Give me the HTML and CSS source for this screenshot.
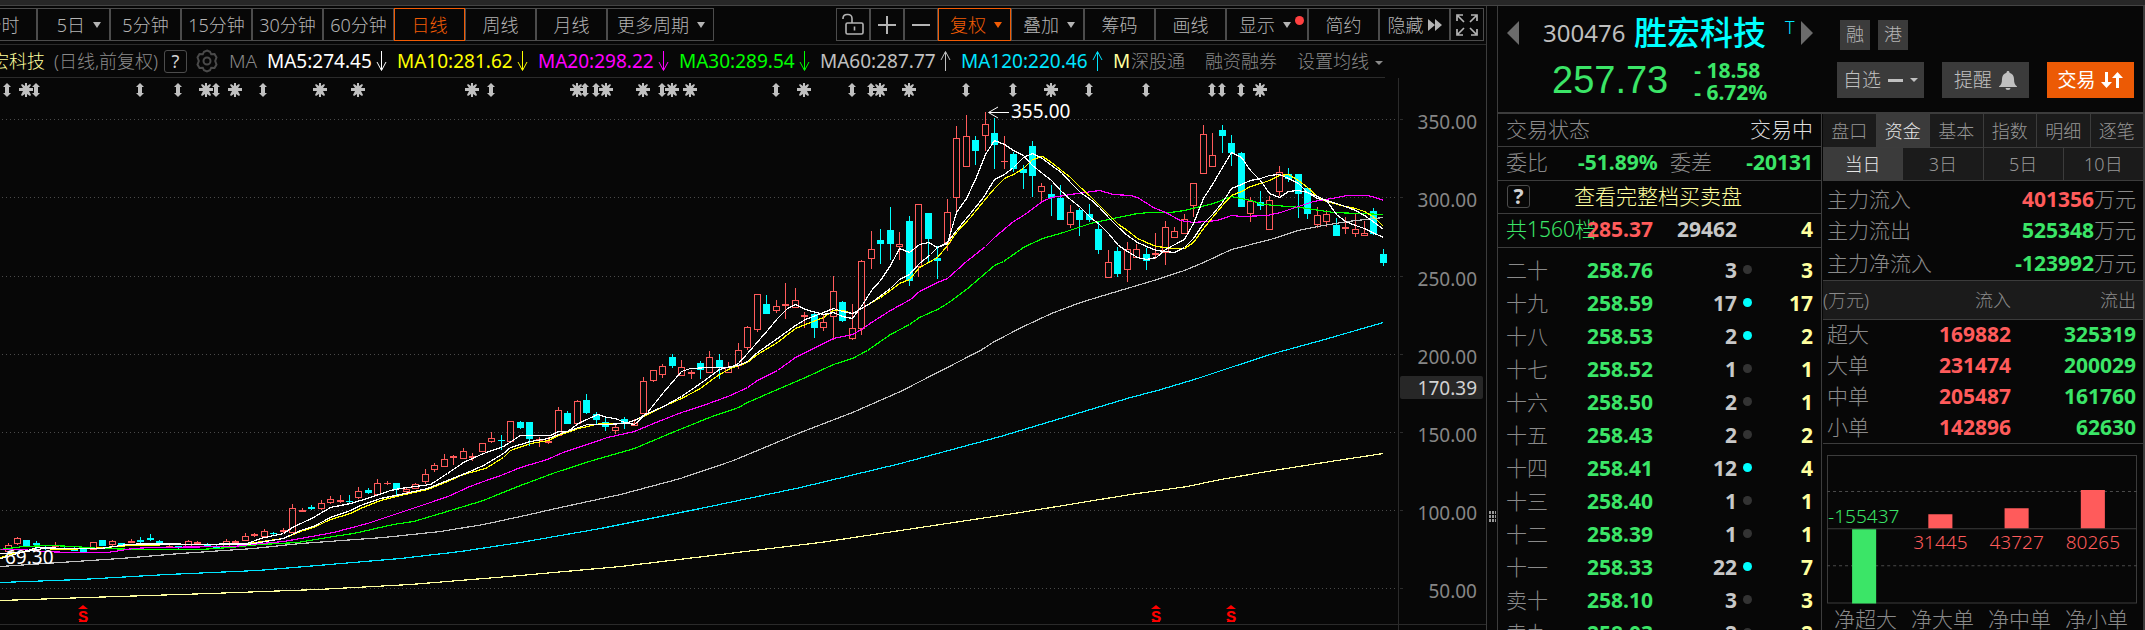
FILE: index.html
```html
<!DOCTYPE html>
<html lang="zh-CN">
<head>
<meta charset="utf-8">
<title>胜宏科技 300476</title>
<link rel="stylesheet" href="styles.css">
</head>
<body>
<div class="titlebar"></div>
<div class="app">
  <main class="chart-pane">
    <nav class="toolbar" aria-label="周期">
      <div class="group periods">
        <button class="tool">分时</button>
        <button class="tool w-caret">5日<i class="caret"></i></button>
        <button class="tool">5分钟</button>
        <button class="tool">15分钟</button>
        <button class="tool">30分钟</button>
        <button class="tool">60分钟</button>
        <button class="tool on">日线</button>
        <button class="tool">周线</button>
        <button class="tool">月线</button>
        <button class="tool w-more">更多周期<i class="caret"></i></button>
      </div>
      <div class="group actions">
        <button class="tool icon" aria-label="解锁">
          <svg width="22" height="24" viewBox="0 0 22 24"><path d="M1 6V5a4 4 0 0 1 4-3.500h1a4 4 0 0 1 4 4V10M4 19.500v-8q0-1.500 1.500-1.500h14q1.500 0 1.500 1.500v8q0 1.500-1.500 1.500H5.500Q4 21 4 19.500M12.500 13.500v4" fill="none" stroke="currentColor" stroke-width="1.600"/></svg>
        </button>
        <button class="tool icon" aria-label="放大">
          <svg width="18" height="18" viewBox="0 0 18 18"><path d="M9 0v18M0 9h18" stroke="currentColor" stroke-width="2"/></svg>
        </button>
        <button class="tool icon" aria-label="缩小">
          <svg width="18" height="18" viewBox="0 0 18 18"><path d="M0 9h18" stroke="currentColor" stroke-width="2"/></svg>
        </button>
        <button class="tool w-caret on">复权<i class="caret"></i></button>
        <button class="tool w-caret">叠加<i class="caret"></i></button>
        <button class="tool">筹码</button>
        <button class="tool">画线</button>
        <button class="tool w-show">显示<i class="caret"></i><i class="reddot"></i></button>
        <button class="tool">简约</button>
        <button class="tool hide">隐藏<svg width="14" height="12" viewBox="0 0 14 12"><path d="M0 0l7 6-7 6zM7 0l7 6-7 6z" fill="currentColor"/></svg></button>
        <button class="tool icon" aria-label="全屏">
          <svg width="22" height="22" viewBox="0 0 22 22"><path d="M1 7V1h6M15 1h6v6M21 15v6h-6M7 21H1v-6M2 2l6 6M20 2l-6 6M20 20l-6-6M2 20l6-6" fill="none" stroke="currentColor" stroke-width="1.700"/></svg>
        </button>
      </div>
    </nav>

    <div class="indicators">
      <span class="stock">胜宏科技</span>
      <span class="mode">(日线,前复权)</span>
      <button class="help">?</button>
      <button class="gear" aria-label="设置">
        <svg width="22" height="24" viewBox="0 0 22 24"><path d="M11 1.500l3 1.200 1.200 2.600 3.300-.3 2 3.400-1.300 3.600 1.300 3.600-2 3.400-3.300-.3-1.200 2.600-3 1.200-3-1.200-1.200-2.600-3.300.3-2-3.400L2.800 12 1.500 8.400l2-3.400 3.300.3L8 2.700z" fill="none" stroke="currentColor" stroke-width="2"/><circle cx="11" cy="12" r="3.500" fill="none" stroke="currentColor" stroke-width="2"/></svg>
      </button>
      <span class="ma-name">MA</span>
      <span class="ma ma5 first">MA5:274.45<svg class="arr" viewBox="0 0 11 20"><path d="M5.500 0v19M1 11l4.500 8.500L10 11"/></svg></span>
      <span class="ma ma10">MA10:281.62<svg class="arr" viewBox="0 0 11 20"><path d="M5.500 0v19M1 11l4.500 8.500L10 11"/></svg></span>
      <span class="ma ma20">MA20:298.22<svg class="arr" viewBox="0 0 11 20"><path d="M5.500 0v19M1 11l4.500 8.500L10 11"/></svg></span>
      <span class="ma ma30">MA30:289.54<svg class="arr" viewBox="0 0 11 20"><path d="M5.500 0v19M1 11l4.500 8.500L10 11"/></svg></span>
      <span class="ma ma60">MA60:287.77<svg class="arr" viewBox="0 0 11 20"><path d="M5.500 20V1M1 9L5.500.5 10 9"/></svg></span>
      <span class="ma ma120 last">MA120:220.46<svg class="arr" viewBox="0 0 11 20"><path d="M5.500 20V1M1 9L5.500.5 10 9"/></svg></span>
      <span class="ma-rest">M</span>
      <div class="links">
        <a href="#sgt">深股通</a>
        <a href="#rzrq">融资融券</a>
        <a href="#ma">设置均线<i class="caret small"></i></a>
      </div>
    </div>

    <svg class="kline" viewBox="0 78 1486 552" preserveAspectRatio="xMinYMin slice" role="img" aria-label="日K线图">
      <defs>
        <path id="ud" d="M0-7l4 4H2v6h2L0 7l-4-4h2v-6h-2z"/>
        <path id="st" d="M-1-7h2v3l3-2 1 1-2 3h4v3H3l2 4-1 1-3-2v3h-2v-3l-3 2-1-1 2-4h-4v-3h4l-2-3 1-1 3 2z"/>
      </defs>
      <g id="grid"></g>
      <g id="events" class="events"></g>
      <g id="candles" class="crisp"></g>
      <g class="lines crisp" transform="translate(.5 .5)">
        <polyline class="l250" points="0,600 87,597 210,593 317,589 410,584 520,575 620,566 720,554 820,542 920,527 1020,512 1130,494 1187,486 1220,479 1273,470 1330,461 1383,453"/>
        <polyline class="l120" points="0,582 80,579 167,574 257,570 317,565 400,558 460,551 520,542 600,528 700,508 800,487 900,463 1000,436 1080,412 1130,397 1157,390 1197,378 1230,367 1273,353 1317,341 1383,322"/>
        <polyline class="l60" points="0,566 60,562 120,558 180,553 253,548 300,543 383,537 440,531 483,524 520,516 560,507 620,494 680,478 733,460 800,432 852,412 900,391 980,350 994,341 1023,326 1051,313 1080,302 1113,292 1150,281 1184,270 1203,262 1231,249 1270,239 1298,230 1317,226 1347,221 1383,217"/>
        <polyline class="l30" points="0,549 23,546 50,545 73,546 100,548 140,549 200,549 230,547 260,544 297,542 333,536 353,533 393,524 413,521 440,513 483,500 500,493 520,485 555,472 592,460 634,448 667,434 709,417 738,407 747,402 777,389 805,377 833,364 852,358 867,350 890,334 909,324 919,317 937,309 947,303 966,289 994,265 1003,261 1023,247 1042,238 1063,232 1090,223 1113,218 1137,213 1150,212 1170,212 1184,210 1213,203 1231,196 1250,200 1263,204 1300,207 1333,212 1383,214"/>
        <polyline class="l20" points="0,549 20,549 43,551 70,552 107,552 133,548 150,547 233,546 250,544 283,541 300,538 333,532 367,523 400,512 433,501 450,495 467,487 483,481 503,474 520,467 547,459 560,453 607,437 634,431 653,423 681,412 700,406 730,395 747,387 757,380 777,370 795,357 823,343 833,338 852,334 861,329 871,322 890,310 910,299 919,291 937,282 947,278 966,261 985,246 994,237 1013,221 1023,215 1042,201 1051,197 1070,194 1099,190 1113,194 1130,195 1137,197 1153,207 1165,212 1180,220 1193,222 1217,220 1231,215 1241,216 1267,215 1280,212 1298,206 1313,201 1337,197 1347,195 1367,195 1375,197 1383,200"/>
        <polyline class="l10" points="0,557 9,554 30,550 43,548 60,549 90,548 130,545 180,544 240,544 283,538 300,531 313,527 330,519 350,513 360,508 380,500 400,495 427,489 447,481 463,474 485,468 503,457 510,450 530,443 548,440 558,435 578,428 600,423 624,423 634,420 647,414 663,406 681,398 700,388 709,381 719,374 730,368 747,362 757,354 777,342 795,328 805,324 823,317 833,310 842,310 852,313 861,308 880,297 890,290 899,283 909,279 919,267 930,261 937,257 947,245 956,232 970,217 983,201 994,188 1004,178 1013,174 1023,168 1032,159 1042,156 1051,162 1061,170 1070,177 1080,187 1090,196 1099,205 1108,214 1118,224 1127,230 1137,238 1146,242 1156,246 1165,247 1174,248 1184,248 1193,242 1203,228 1212,217 1222,205 1231,195 1241,191 1250,186 1260,183 1269,180 1279,175 1288,174 1298,180 1307,187 1317,196 1326,201 1345,206 1355,208 1364,211 1374,217 1383,226"/>
        <polyline class="l5" points="0,553 20,552 43,548 100,548 127,544 200,544 247,544 283,538 300,530 313,526 330,517 350,510 360,505 380,498 400,494 427,488 447,480 467,472 483,465 503,453 510,447 530,441 548,438 558,434 578,427 587,424 605,424 624,423 634,420 647,413 663,406 681,396 700,383 719,369 730,366 738,365 747,361 757,352 777,338 795,325 805,319 823,312 833,308 842,311 852,313 861,308 871,302 890,288 899,279 909,274 919,263 930,254 937,247 947,242 956,230 970,213 983,197 994,179 1004,174 1013,167 1023,157 1032,153 1042,158 1051,165 1061,172 1070,182 1080,192 1090,199 1099,207 1108,217 1118,227 1127,235 1137,242 1146,246 1156,250 1165,251 1174,252 1184,247 1193,238 1203,223 1212,214 1222,202 1231,188 1241,184 1250,180 1260,178 1269,175 1279,174 1288,178 1298,183 1307,192 1317,198 1326,200 1336,203 1345,206 1355,210 1364,215 1374,222 1383,229"/>
        <polyline class="l5" points="0,558 17,553 37,547 67,548 100,548 127,544 150,543 200,544 247,543 260,538 283,533 292,527 313,517 330,507 350,503 370,497 390,490 400,488 430,484 447,473 463,462 483,453 503,446 520,435 550,435 558,431 567,431 578,423 597,414 607,417 615,418 624,422 634,424 647,412 663,392 681,371 690,368 710,367 730,367 738,363 747,353 767,330 777,318 787,308 795,304 805,309 823,314 833,312 842,316 852,318 861,306 871,290 880,280 890,265 899,248 909,252 919,244 928,242 937,247 947,243 956,212 966,198 975,179 985,154 994,140 1004,144 1013,150 1023,155 1032,165 1042,173 1051,180 1061,191 1070,199 1080,207 1090,217 1099,224 1108,233 1118,245 1127,251 1137,257 1146,259 1156,257 1165,249 1184,239 1193,223 1203,198 1212,184 1222,167 1231,152 1241,157 1250,170 1260,180 1269,193 1279,197 1288,191 1298,190 1307,192 1317,196 1326,200 1336,214 1345,221 1355,225 1364,228 1374,233 1383,237"/>
      </g>
      <path class="frame" d="M0 624.500h1486M1398.500 78v552"/>
      <path class="pointer" d="M1009 112.500h-20M998 107l-9.500 5.500 9.500 5.500"/>
      <text class="extreme" x="1011" y="118">355.00</text>
      <text class="extreme" x="5" y="564">69.30</text>
      <rect class="tag" x="1400" y="376" width="83" height="23" rx="2"/>
      <text class="tick tagtext" x="1477" y="395">170.39</text>
      <g id="trades" class="trades"></g>
    </svg>
  </main>

  <div class="splitter"><i></i></div>

  <aside class="quote">
    <header class="head">
      <div class="ident">
        <div class="title">
          <button class="nav" aria-label="上一个"><svg width="12" height="24" viewBox="0 0 12 24"><path d="M12 0v24L0 12z"/></svg></button>
          <span class="code">300476</span>
          <h1 class="name">胜宏科技</h1>
          <span class="flag">T</span>
          <button class="nav" aria-label="下一个"><svg width="12" height="24" viewBox="0 0 12 24"><path d="M0 0v24l12-12z"/></svg></button>
        </div>
        <div class="price">
          <strong class="last-price">257.73</strong>
          <div class="delta"><span>- 18.58</span><span>- 6.72%</span></div>
        </div>
      </div>
      <div class="side">
        <div class="badges"><span>融</span><span>港</span></div>
        <div class="btns">
          <button class="btn">自选<i class="dash"></i><i class="caret small"></i></button>
          <button class="btn">提醒<svg width="18" height="19" viewBox="0 0 18 19"><path d="M9 0c1 0 1.500.7 1.500 1.700C13.500 2.500 15 5 15 8c0 4 1 6 3 7.500V16H0v-.5C2 14 3 12 3 8c0-3 1.500-5.500 4.500-6.300C7.500.7 8 0 9 0zM6.500 17h5a2.500 2 0 0 1-5 0z" fill="currentColor"/></svg></button>
          <button class="btn trade">交易<svg width="24" height="17" viewBox="0 0 24 17"><path d="M5 0h3v10h4l-5.500 6L1 10h4zM16 16h3V6h4l-5.500-6L12 6h4z" fill="currentColor"/></svg></button>
        </div>
      </div>
    </header>

    <div class="cols">
      <section class="book">
        <div class="row"><span>交易状态</span><span class="bright">交易中</span></div>
        <div class="row ratio"><span>委比</span><b class="g">-51.89%</b><span>委差</span><b class="g">-20131</b></div>
        <div class="row full"><button class="help">?</button><a href="#depth">查看完整档买卖盘</a></div>
        <div class="row total"><span class="g">共1560档</span><b class="r">285.37</b><b class="q">29462</b><b class="y">4</b></div>
        <table class="levels">
          <tbody>
            <tr><th>二十</th><td class="g">258.76</td><td class="q">3</td><td><i class="dot"></i></td><td class="y">3</td></tr>
            <tr><th>十九</th><td class="g">258.59</td><td class="q">17</td><td><i class="dot c"></i></td><td class="y">17</td></tr>
            <tr><th>十八</th><td class="g">258.53</td><td class="q">2</td><td><i class="dot c"></i></td><td class="y">2</td></tr>
            <tr><th>十七</th><td class="g">258.52</td><td class="q">1</td><td><i class="dot"></i></td><td class="y">1</td></tr>
            <tr><th>十六</th><td class="g">258.50</td><td class="q">2</td><td><i class="dot"></i></td><td class="y">1</td></tr>
            <tr><th>十五</th><td class="g">258.43</td><td class="q">2</td><td><i class="dot"></i></td><td class="y">2</td></tr>
            <tr><th>十四</th><td class="g">258.41</td><td class="q">12</td><td><i class="dot c"></i></td><td class="y">4</td></tr>
            <tr><th>十三</th><td class="g">258.40</td><td class="q">1</td><td><i class="dot"></i></td><td class="y">1</td></tr>
            <tr><th>十二</th><td class="g">258.39</td><td class="q">1</td><td><i class="dot"></i></td><td class="y">1</td></tr>
            <tr><th>十一</th><td class="g">258.33</td><td class="q">22</td><td><i class="dot c"></i></td><td class="y">7</td></tr>
            <tr><th>卖十</th><td class="g">258.10</td><td class="q">3</td><td><i class="dot"></i></td><td class="y">3</td></tr>
            <tr><th>卖九</th><td class="g">258.03</td><td class="q">2</td><td><i class="dot"></i></td><td class="y">2</td></tr>
          </tbody>
        </table>
      </section>

      <section class="funds">
        <div class="tabs">
          <button>盘口</button><button class="on">资金</button><button>基本</button><button>指数</button><button>明细</button><button>逐笔</button>
        </div>
        <div class="tabs days">
          <button class="on">当日</button><button>3日</button><button>5日</button><button>10日</button>
        </div>
        <dl class="main-flow">
          <div><dt>主力流入</dt><dd><b class="r">401356</b>万元</dd></div>
          <div><dt>主力流出</dt><dd><b class="g">525348</b>万元</dd></div>
          <div class="net"><dt>主力净流入</dt><dd><b class="g">-123992</b>万元</dd></div>
        </dl>
        <table class="flow">
          <thead><tr><th>(万元)</th><th>流入</th><th>流出</th></tr></thead>
          <tbody>
            <tr><th>超大</th><td class="r">169882</td><td class="g">325319</td></tr>
            <tr><th>大单</th><td class="r">231474</td><td class="g">200029</td></tr>
            <tr><th>中单</th><td class="r">205487</td><td class="g">161760</td></tr>
            <tr><th>小单</th><td class="r">142896</td><td class="g">62630</td></tr>
          </tbody>
        </table>
        <div class="net-chart">
          <svg viewBox="0 0 309 149" role="img" aria-label="净流入">
            <path d="M.5.500h308v147H.500zM0 73.500h309" fill="none" stroke="#3c3c3c"/>
            <path d="M0 36.500h309M0 110.500h309" stroke="#4a4a4a" stroke-dasharray="3 3"/>
            <path d="M25 74h24v74H25z" fill="#3be567"/>
            <path d="M101 59h24v14h-24zM177 53h24v20h-24zM253 35h24v38h-24z" fill="#ff5b5b"/>
            <text class="neg" x="1" y="68">-155437</text>
            <text x="113" y="94" text-anchor="middle">31445</text>
            <text x="189" y="94" text-anchor="middle">43727</text>
            <text x="265" y="94" text-anchor="middle">80265</text>
          </svg>
          <div class="cats"><span>净超大</span><span>净大单</span><span>净中单</span><span>净小单</span></div>
        </div>
      </section>
    </div>
  </aside>
</div>
<script src="chart.js"></script>
</body>
</html>
```

FILE: styles.css
```css
* { box-sizing: border-box; }

html, body { height: 100%; }

body {
  margin: 0;
  overflow: hidden;
  display: flex;
  flex-direction: column;
  background: #070707;
  color: #8a8a8a;
  font: 300 18px/24px "Noto Sans", "Noto Sans CJK SC", sans-serif;
  white-space: nowrap;
}

button {
  margin: 0;
  padding: 0;
  border: 0;
  background: none;
  color: inherit;
  font: inherit;
}

a { color: inherit; text-decoration: none; }
b, strong { font-weight: 700; }
svg { display: block; }
i { display: block; }

.g { color: #3be567; }
.r { color: #ff5b5b; }
.q { color: #c8c8c8; }
.y { color: #ffff9e; }
.bright { color: #dedede; }

.titlebar {
  flex: none;
  height: 6px;
  background: #272727;
  border-bottom: 1px solid #444;
}

.app { flex: 1; min-height: 0; display: flex; }

/* chart side */
.chart-pane {
  flex: 1;
  min-width: 0;
  overflow: hidden;
  display: flex;
  flex-direction: column;
}

.toolbar {
  flex: none;
  display: flex;
  justify-content: space-between;
  height: 39px;
  padding: 2px 2px 3px 0;
  border-bottom: 1px solid #2b2b2b;
  color: #b4b4b4;
}

.group { display: flex; }
.periods { margin-left: -34px; }

.tool {
  display: flex;
  align-items: center;
  justify-content: center;
  flex: none;
  width: 71px;
  border: 1px solid #4c4c4c;
}
.tool.on { color: #f25c05; border-color: #f25c05; }
.tool.icon { width: 34px; }
.tool.w-caret { width: 73px; justify-content: flex-end; padding-right: 8px; }
.tool.w-more { width: 107px; justify-content: flex-end; padding-right: 8px; }
.tool.w-show { width: 82px; justify-content: flex-end; padding-right: 3px; }
.tool.hide { gap: 4px; }

.caret {
  margin-left: 8px;
  border: 4px solid transparent;
  border-top: 6px solid;
  border-bottom: 0;
}
.caret.small { display: inline-block; vertical-align: middle; margin-left: 6px; border-top-width: 4px; }

.reddot {
  align-self: flex-start;
  width: 9px;
  height: 9px;
  margin: 7px 0 0 4px;
  border-radius: 50%;
  background: #ff4040;
}

.indicators {
  flex: none;
  display: flex;
  align-items: center;
  width: calc(100% - 74px);
  height: 33px;
  margin-left: -27px;
  border-bottom: 1px solid #2b2b2b;
}
.stock { width: 81px; color: #ffff9e; }
.mode { width: 110px; }
.help {
  width: 23px;
  height: 23px;
  border: 1px solid #4c4c4c;
  border-radius: 3px;
  color: #d2d2d2;
  font-weight: 400;
  line-height: 20px;
}
.gear { margin: 0 11px 0 9px; color: #4a4a4a; }
.ma-name { width: 38px; font-size: 19px; }
.ma {
  display: flex;
  align-items: center;
  justify-content: space-between;
  width: 141px;
  padding-right: 10px;
  font-size: 19px;
  font-weight: 400;
}
.ma.first { width: 130px; }
.ma.last { width: 152px; }
.arr { width: 11px; height: 20px; fill: none; stroke: currentColor; stroke-width: 1; }
.ma5 { color: #fff; }
.ma10 { color: #ff0; }
.ma20 { color: #f0f; }
.ma30 { color: #0f0; }
.ma60 { color: #c0c0c0; }
.ma120 { color: #00e5ff; }
.ma-rest { width: 18px; color: #ffff9e; font-size: 19px; font-weight: 400; }
.links { display: flex; gap: 20px; }

.kline { flex: 1; min-height: 0; width: 100%; }
.crisp { shape-rendering: crispEdges; }
.gridline { stroke: #4a4a4a; stroke-dasharray: 1 3; }
.frame { fill: none; stroke: #2b2b2b; shape-rendering: crispEdges; }
.tick { fill: #868686; font-size: 19px; font-weight: 400; text-anchor: end; }
.extreme { fill: #fff; font-size: 19px; font-weight: 400; }
.tick.tagtext { fill: #d2d2d2; }
.tag { fill: #272727; }
.pointer { fill: none; stroke: #fff; }
.events { fill: #c0c0c0; }
.trades { fill: #f00; font: 700 17px "Liberation Mono", monospace; text-anchor: middle; }
.lines { fill: none; stroke-width: 1.2; }
.l5 { stroke: #fff; }
.l10 { stroke: #ff0; }
.l20 { stroke: #f0f; }
.l30 { stroke: #0f0; }
.l60 { stroke: #c0c0c0; }
.l120 { stroke: #00e5ff; }
.l250 { stroke: #ffff9e; }
.up { fill: none; stroke: #ff5b5b; }
.down { fill: #0ff; stroke: #0ff; }

.splitter {
  flex: none;
  display: flex;
  justify-content: center;
  width: 12px;
  padding-top: 504px;
  border: solid #3c3c3c;
  border-width: 0 1px;
}
.splitter i {
  width: 7px;
  height: 13px;
  background: repeating-linear-gradient(#070707 0 1px, transparent 1px 4px),
    repeating-linear-gradient(90deg, #999 0 2px, #070707 2px 3px);
}

/* quote side */
.quote {
  flex: none;
  width: 647px;
  display: flex;
  flex-direction: column;
  border-right: 2px solid #3c3c3c;
}

.head {
  flex: none;
  display: flex;
  justify-content: space-between;
  height: 108px;
  padding-right: 9px;
  border-bottom: 2px solid #3c3c3c;
}

.title { display: flex; align-items: center; height: 53px; padding-left: 9px; }
.nav { width: 12px; }
.nav path { fill: #6b6b6b; }
.code { margin-left: 24px; width: 91px; color: #bebebe; font-size: 24px; font-weight: 400; }
.name { margin: 0; width: 151px; color: #0ff; font-size: 33px; font-weight: 500; line-height: 40px; }
.flag { width: 16px; align-self: flex-start; padding-top: 9px; color: #00e5ff; }

.price { display: flex; gap: 26px; padding-left: 54px; }
.last-price { color: #3be567; font: 400 38px/42px "Liberation Sans", sans-serif; }
.delta {
  display: flex;
  flex-direction: column;
  color: #3be567;
  font-size: 21px;
  font-weight: 700;
  line-height: 22px;
}

.side { width: 297px; padding-top: 14px; }
.badges { display: flex; gap: 8px; padding-left: 3px; color: #b4b4b4; }
.badges span { width: 30px; height: 30px; background: #3b3b3b; text-align: center; line-height: 29px; }
.btns { display: flex; justify-content: space-between; margin-top: 12px; }
.btn {
  display: flex;
  align-items: center;
  justify-content: center;
  gap: 7px;
  width: 87px;
  height: 36px;
  background: #3b3b3b;
  color: #c0c0c0;
  font-size: 19px;
}
.btn .caret { margin: 0; }
.btn.trade { gap: 4px; background: #ec5a05; color: #fff; font-weight: 400; }
.dash { width: 15px; height: 3px; background: currentColor; }

.cols { flex: 1; min-height: 0; display: flex; }

.book {
  width: 324px;
  flex: none;
  overflow: hidden;
  border-right: 1px solid #3c3c3c;
  font-size: 21px;
}

.row {
  display: flex;
  align-items: center;
  justify-content: space-between;
  height: 33px;
  padding: 0 8px 2px;
  border-bottom: 1px solid #3c3c3c;
}
.row.ratio { display: grid; grid-template-columns: 72px 92px 1fr auto; height: 34px; padding-bottom: 3px; }
.row.full { justify-content: flex-start; gap: 44px; padding-left: 9px; color: #ffff9e; }
.row.full .help { font-weight: 700; }
.row.total { display: grid; grid-template-columns: 81px 66px 84px 1fr; height: 34px; padding-bottom: 3px; text-align: right; }
.row.total span { text-align: left; }

.levels {
  width: 100%;
  table-layout: fixed;
  margin-top: 5px;
  border-collapse: collapse;
  font-weight: 700;
}
.levels tr { height: 33px; }
.levels th { width: 89px; padding: 0 0 0 8px; text-align: left; font-weight: 300; }
.levels td { padding: 0; }
.levels td:nth-child(2) { width: 66px; }
.levels td:nth-child(3) { width: 84px; text-align: right; }
.levels td:nth-child(4) { width: 20px; }
.levels td:nth-child(5) { padding-right: 8px; text-align: right; }
.dot { width: 9px; height: 9px; margin: 0 auto; border-radius: 50%; background: #333; }
.dot.c { background: #0ff; }

.funds { flex: 1; min-width: 0; padding-left: 1px; }

.tabs { display: flex; height: 34px; border-bottom: 1px solid #3c3c3c; }
.tabs button { flex: 1; background: #1b1b1b; color: #969696; border-right: 1px solid #3c3c3c; }
.tabs button:last-child { border-right: 0; }
.tabs button.on { background: #3b3b3b; color: #e8e8e8; }
.tabs.days { height: 33px; }

.main-flow { margin: 0; padding: 2px 7px 0 4px; height: 99px; font-size: 21px; }
.main-flow div { display: flex; justify-content: space-between; height: 31px; align-items: center; }
.main-flow .net { height: 36px; }
.main-flow dd { margin: 0; }

.flow { width: 100%; table-layout: fixed; border-collapse: collapse; border-bottom: 1px solid #3c3c3c; font-size: 21px; }
.flow th { padding: 0 0 0 4px; text-align: left; font-weight: 300; }
.flow tbody th { padding-bottom: 2px; }
.flow td { padding: 0 0 2px; height: 31px; text-align: right; font-weight: 700; }
.flow tr > :nth-child(1) { width: 90px; }
.flow tr > :nth-child(2) { width: 98px; }
.flow tr > :nth-child(3) { padding-right: 7px; }
.flow thead tr { height: 39px; background: #1b1b1b; border: solid #3c3c3c; border-width: 1px 0; font-size: 18px; }
.flow thead th { padding-left: 0; text-align: right; }
.flow thead th:first-child { text-align: left; }

.net-chart { padding: 11px 6px 0 4px; }
.net-chart svg { width: 100%; font-size: 19px; fill: #ff5b5b; }
.net-chart .neg { fill: #3be567; }
.cats { display: grid; grid-template-columns: repeat(4, 1fr); padding: 3px 2px 0 0; text-align: center; font-size: 21px; }
```

FILE: chart.js
```js
const NS = "http://www.w3.org/2000/svg";

function add(parent, tag, attrs, text) {
  const el = document.createElementNS(NS, tag);
  for (const k in attrs) el.setAttribute(k, attrs[k]);
  if (text) el.textContent = text;
  parent.appendChild(el);
}

const $ = (id) => document.getElementById(id);

// price axis: [label, y]
[["350.00", 119], ["300.00", 197], ["250.00", 276], ["200.00", 354],
 ["150.00", 432], ["100.00", 510], ["50.00", 588]].forEach(([label, y]) => {
  add($("grid"), "path", { class: "gridline crisp", d: `M2 ${y}.500H1397` });
  add($("grid"), "path", { class: "frame", d: `M1400 ${y}.500h3` });
  add($("grid"), "text", { class: "tick", x: 1477, y: y + 10 }, label);
});

// event markers above the candles
const upDown = [7, 36, 140, 178, 216, 263, 491, 585, 596, 662, 776, 852, 871, 966, 1013, 1089, 1146, 1212, 1222, 1241];
const stars = [26, 206, 235, 320, 358, 472, 577, 606, 643, 672, 690, 804, 880, 909, 1051, 1260];
upDown.forEach((x) => add($("events"), "use", { href: "#ud", x, y: 90 }));
stars.forEach((x) => add($("events"), "use", { href: "#st", x, y: 90 }));

[83, 1156, 1231].forEach((x) => {
  add($("trades"), "path", { d: `M${x - 5} 609l5-4 5 4z` });
  add($("trades"), "text", { x, y: 622 }, "S");
  add($("trades"), "path", { d: `M${x - 4} 621h8v1h-8z` });
});

// candles: direction, high, body top, body bottom, low
const data = `u543,545,552,552 u537,538,544,545 d540,540,547,547 d541,543,545,549 d546,548,549,550
u542,545,547,548 d546,548,549,549 d547,548,551,551 d549,549,552,552 u542,542,550,550
d540,540,546,546 u540,541,545,546 d543,543,545,547 u539,541,543,543 d537,540,542,543
d534,538,540,541 d540,541,543,544 u545,546,548,548 d546,546,548,549 u540,541,548,548
u541,542,544,544 d543,545,547,547 d545,547,548,548 u539,541,547,547 u540,541,543,544
u533,536,541,541 u533,534,536,537 u529,531,537,537 d532,533,534,535 u528,530,532,533
u504,508,533,533 u508,510,512,512 d505,507,509,510 u500,503,509,510 u496,499,503,504
u495,500,502,503 d495,501,502,503 u487,491,498,499 d488,490,493,494 u479,483,495,495
u481,483,484,485 d483,483,489,495 u488,489,492,495 u483,484,489,489 u469,474,482,484
u463,465,470,472 u454,459,467,467 u455,456,458,465 u448,451,459,459 u453,456,458,461
u443,443,452,452 u432,438,442,443 d435,440,441,450 u421,421,442,442 d421,422,428,429
d422,422,439,446 u437,439,441,447 u437,441,443,444 u407,410,436,436 d411,413,424,424
u400,401,424,424 d394,400,413,414 d412,414,420,424 d418,422,427,431 u424,427,431,434
d417,419,424,429 u419,423,426,426 u377,381,414,414 u370,370,381,382 u364,366,375,378
d354,357,366,368 u360,367,376,376 u370,372,374,379 d361,363,370,379 u351,357,373,373
d354,360,368,379 u362,367,373,373 u343,350,366,369 u326,327,348,350 u294,294,330,332
d295,304,314,314 u300,306,311,313 u283,304,306,319 u288,300,308,308 u312,315,317,328
d312,314,328,338 u315,322,328,331 u276,291,317,340 d301,302,321,322 u304,328,339,340
u260,261,329,335 u231,249,259,269 d229,240,244,264 d207,230,244,260 u232,244,247,260
d216,221,281,286 u204,204,267,277 d213,213,239,262 d246,258,261,279 u199,212,243,251
u126,138,198,211 u115,136,167,167 d136,140,151,165 u112,124,136,151 d118,133,145,169
u136,161,162,169 d152,154,169,172 d165,169,173,189 d141,146,176,197 u183,186,192,201
d185,194,198,216 d185,198,220,220 u205,212,225,228 d208,210,220,236 d204,214,220,222
d222,229,250,254 u250,262,278,278 d247,251,274,277 u242,249,270,282 u244,249,258,258
d248,254,261,270 u233,253,255,259 u221,227,253,265 u227,231,238,238 u214,219,234,234
u183,183,206,217 u125,134,174,174 u133,155,167,167 d125,130,136,153 d135,143,153,166
d152,153,207,207 u197,201,214,222 d191,202,206,210 u196,200,230,230 u166,172,192,196
d168,174,179,182 d174,174,194,218 d187,188,214,219 u207,215,225,228 u210,214,222,227
d218,225,236,236 u217,227,229,234 u213,229,234,237 u221,233,236,236 d208,211,234,235
d249,254,263,266`.split(/\s+/);

const STEP = 9.486;
data.forEach((item, i) => {
  const [high, top, bottom, low] = item.slice(1).split(",").map(Number);
  const x = Math.round(17 + STEP * (i - 1));
  const h = Math.max(bottom - top - 1, 0);
  const body = h ? `M${x - 2.5} ${top + 0.5}h6v${h}h-6z` : `M${x - 3} ${top + 0.5}h7`;
  add($("candles"), "path", {
    class: item[0] === "u" ? "up" : "down",
    d: `${body}M${x + 0.5} ${high}V${top}M${x + 0.5} ${bottom}V${low}`,
  });
});
```
